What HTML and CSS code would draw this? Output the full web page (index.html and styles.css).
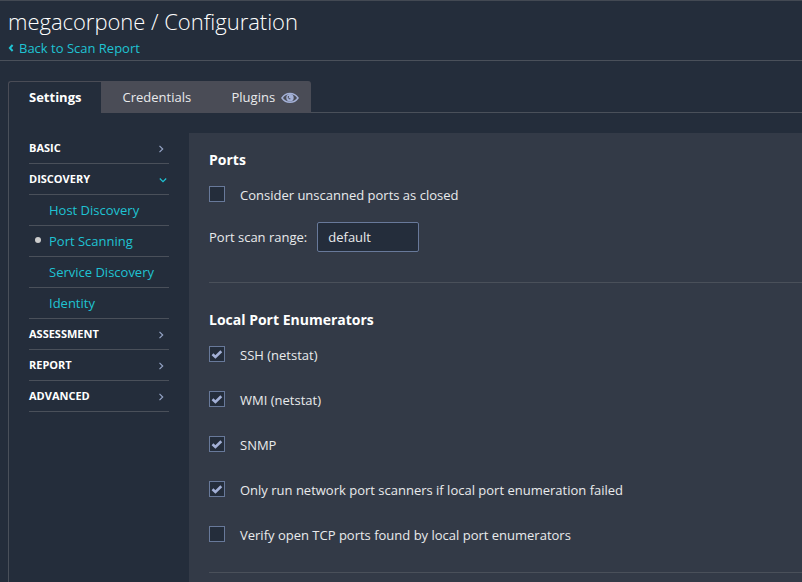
FILE: index.html
```html
<!DOCTYPE html>
<html lang="en">
<head>
<meta charset="utf-8">
<title>megacorpone / Configuration</title>
<link rel="stylesheet" href="styles.css">
</head>
<body>
<svg class="defs" width="0" height="0" aria-hidden="true">
  <symbol id="chevron" viewBox="0 0 6 8"><path d="M1.5 .8L4.7 4L1.5 7.2"/></symbol>
  <symbol id="tick" viewBox="0 0 12 12"><path d="M1.5 6.3L4.4 9L10.3 3.2"/></symbol>
</svg>
<header class="header">
  <h1 class="title">megacorpone / Configuration</h1>
  <a class="back"><svg class="back-icon" viewBox="0 0 6 8"><path d="M4.6 1L1.9 4L4.6 7"/></svg>Back to Scan Report</a>
</header>
<nav class="tabs">
  <a class="tab tab-active">Settings</a>
  <a class="tab tab-credentials">Credentials</a>
  <a class="tab tab-plugins">Plugins
    <svg class="eye" viewBox="0 0 18 12"><path class="eye-lid" d="M1 6C4.8.1 13.2.1 17 6C13.2 11.6 4.8 11.6 1 6Z"/><circle class="eye-iris" cx="9" cy="5.7" r="3.7"/><path class="eye-glint" d="M7.4 4V5.8Q7.8 7.2 9.4 6.8"/></svg>
  </a>
</nav>
<main class="workspace">
  <ul class="menu">
    <li class="group">BASIC<svg class="arrow"><use href="#chevron"/></svg></li>
    <li class="group">DISCOVERY<svg class="arrow arrow-open"><use href="#chevron"/></svg></li>
    <li class="item">Host Discovery</li>
    <li class="item current">Port Scanning</li>
    <li class="item">Service Discovery</li>
    <li class="item">Identity</li>
    <li class="group">ASSESSMENT<svg class="arrow"><use href="#chevron"/></svg></li>
    <li class="group">REPORT<svg class="arrow"><use href="#chevron"/></svg></li>
    <li class="group">ADVANCED<svg class="arrow"><use href="#chevron"/></svg></li>
  </ul>
  <div class="panel">
    <section class="section ports">
      <h2>Ports</h2>
      <div class="option"><span class="box"></span>Consider unscanned ports as closed</div>
      <div class="range"><label for="range">Port scan range:</label><input id="range" type="text" value="default"></div>
    </section>
    <section class="section enumerators">
      <h2>Local Port Enumerators</h2>
      <div class="option"><span class="box"><svg><use href="#tick"/></svg></span>SSH (netstat)</div>
      <div class="option"><span class="box"><svg><use href="#tick"/></svg></span>WMI (netstat)</div>
      <div class="option"><span class="box"><svg><use href="#tick"/></svg></span>SNMP</div>
      <div class="option"><span class="box"><svg><use href="#tick"/></svg></span>Only run network port scanners if local port enumeration failed</div>
      <div class="option"><span class="box"></span>Verify open TCP ports found by local port enumerators</div>
    </section>
  </div>
</main>
</body>
</html>
```
FILE: styles.css
```css
* { box-sizing: border-box; }
body {
  margin: 0;
  height: 582px;
  overflow: hidden;
  display: flex;
  flex-direction: column;
  background: #242d3b;
  color: #e9eaec;
  font: 13px/20px "Open Sans", sans-serif;
}
.defs { position: absolute; }
svg { fill: none; }

.header {
  flex: none;
  height: 61px;
  padding: 4px 8px 0;
  border-top: 1px solid #434953;
  border-bottom: 1px solid #4a505a;
}
.title { margin: 0 0 1px; font-size: 22px; font-weight: 300; line-height: 32px; letter-spacing: -.02px; color: #fff; }
.back { display: flex; align-items: center; color: #1fc3d3; }
.back-icon { width: 6px; height: 8px; margin: -1px 5px 0 0; stroke: #1fc3d3; stroke-width: 2; }

.tabs {
  flex: none;
  display: flex;
  height: 32px;
  margin: 20px 0 0 8px;
  border-bottom: 1px solid #4a505a;
}
.tab {
  display: flex;
  align-items: center;
  height: 32px;
  background: #4a4c56;
}
.tab-active {
  width: 93px;
  padding: 0 0 1px 20px;
  border: solid #4a4c56;
  border-width: 1px 0 0 1px;
  border-radius: 3px 0 0 0;
  background: #242d3b;
  color: #fff;
  font-weight: 700;
}
.tab-credentials { width: 110px; padding-left: 21.5px; }
.tab-plugins { width: 100px; padding-left: 20.5px; border-radius: 0 3px 0 0; }
.eye { width: 18px; height: 12px; margin: 1px 0 0 5.5px; }
.eye-lid { stroke: #a3b0d6; stroke-width: 1.5; }
.eye-iris { fill: #a3b0d6; }
.eye-glint { stroke: #4a4c56; stroke-width: 1; }

.workspace {
  flex: 1;
  display: flex;
  min-height: 0;
  margin-left: 8px;
  padding-top: 20px;
  border-left: 1px solid #4a505a;
}
.menu { flex: none; width: 140px; margin: 0 20px; padding: 0; list-style: none; }
.group, .item {
  display: flex;
  align-items: center;
  height: 31px;
  border-bottom: 1px solid #4a505a;
}
.group { justify-content: space-between; padding-right: 5px; color: #fff; font-size: 11px; font-weight: 700; }
.arrow { width: 6px; height: 8px; margin-top: 2px; stroke: #94a2c4; stroke-width: 1.2; }
.arrow-open { margin-right: -2px; stroke: #1fc3d3; transform: rotate(90deg); }
.item { padding-left: 20px; color: #1fc3d3; }
.current { padding-left: 6px; }
.current::before { content: ""; width: 6px; height: 6px; margin: -3px 8px 0 0; border-radius: 50%; background: #ccc; }

.panel { flex: 1; padding-left: 20px; background: #333a47; }
.section { border-bottom: 1px solid #4a505a; }
.ports { height: 150px; padding-top: 17px; }
.enumerators { height: 290px; padding-top: 27px; }
.section h2 { margin: 0 0 15px; color: #fff; font-size: 14px; line-height: 20px; }
.option { display: flex; height: 20px; margin-bottom: 25px; }
.box {
  flex: none;
  width: 16px;
  height: 16px;
  margin: 1px 15px 0 0;
  padding: 1px;
  border: 1px solid #68799a;
  background: #242d3b;
}
.box svg { display: block; width: 12px; height: 12px; stroke: #a3b0d6; stroke-width: 2.6; }
.range { display: flex; align-items: center; margin-top: -8px; }
.range input {
  width: 102px;
  height: 30px;
  margin: 0 0 0 10px;
  padding: 0 10px;
  border: 1px solid #68799a;
  border-radius: 2px;
  background: #242d3b;
  color: #e9eaec;
  font: inherit;
}
```
